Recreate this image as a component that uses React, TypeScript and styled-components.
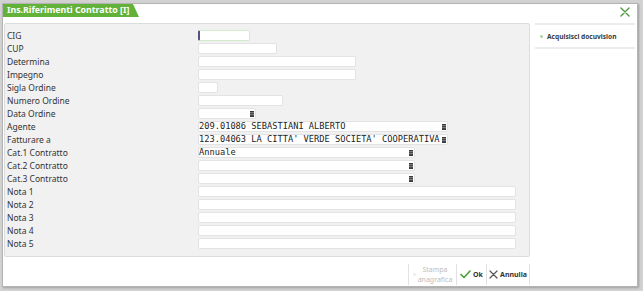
import React from "react";
import styled, { createGlobalStyle } from "styled-components";

const Global = createGlobalStyle`
  html, body { margin: 0; padding: 0; background: #d2d2d2; }
  body { font-family: "Noto Sans", "DejaVu Sans", sans-serif; }
  * { box-sizing: border-box; }
`;

const Page = styled.div`
  padding: 3px 5px 4px 2px;
  width: 643px;
  height: 291px;
`;

const Window = styled.div`
  width: 636px;
  height: 284px;
  background: #ffffff;
  border: 1px solid #b4b4b4;
  box-shadow: 1px 1px 2px rgba(0, 0, 0, 0.25);
  display: flex;
  flex-direction: column;
`;

const Header = styled.div`
  height: 19px;
  display: flex;
  justify-content: space-between;
  align-items: flex-start;
`;

const Tab = styled.div`
  width: 136px;
  height: 13px;
  background: #62b23a;
  clip-path: polygon(0 0, 130px 0, 136px 100%, 0 100%);
  color: #ffffff;
  font-size: 8.8px;
  font-weight: 700;
  line-height: 13px;
  padding-left: 4px;
  white-space: nowrap;
`;

const Close = styled.div`
  width: 12px;
  height: 12px;
  margin: 2px 6px 0 0;
  display: flex;
  align-items: center;
  justify-content: center;
`;

const Body = styled.div`
  flex: 1;
  display: flex;
  gap: 5px;
  padding: 0 2px 0 1px;
`;

const FormColumn = styled.div`
  width: 526px;
  display: flex;
  flex-direction: column;
`;

const Panel = styled.div`
  height: 234px;
  background: #f1f1f1;
  border: 1px solid #dcdcdc;
  border-radius: 2px;
  padding: 6px 0 0 2px;
  display: flex;
  flex-direction: column;
  gap: 2px;
`;

const Row = styled.div`
  display: grid;
  grid-template-columns: 191px auto;
  align-items: center;
  height: 11px;
`;

const Label = styled.div`
  font-size: 8.5px;
  color: #333333;
  line-height: 11px;
  white-space: nowrap;
`;

const Field = styled.div<{ $w: number; $focus?: boolean }>`
  position: relative;
  width: ${(p) => p.$w}px;
  height: 11px;
  background: #ffffff;
  border: 1px solid ${(p) => (p.$focus ? "#d4ebcb" : "#e3e3e3")};
  border-left: ${(p) => (p.$focus ? "2px solid #5b4f7d" : "1px solid #e3e3e3")};
  border-radius: 2px;
  display: flex;
  align-items: center;
  font-family: "DejaVu Sans Mono", "Liberation Mono", monospace;
  font-size: 8.7px;
  color: #222222;
  line-height: 9px;
  white-space: nowrap;
`;

const Lookup = styled.span`
  position: absolute;
  right: 1px;
  top: 50%;
  transform: translateY(-50%);
  width: 4px;
  height: 6px;
  display: block;
  line-height: 0;
`;

const Footer = styled.div`
  flex: 1;
  display: flex;
  justify-content: flex-end;
  align-items: flex-start;
  padding-top: 7px;
`;

const Btn = styled.div<{ $w: number; $last?: boolean; $disabled?: boolean }>`
  width: ${(p) => p.$w}px;
  height: 21px;
  border-left: 1px solid #e2e2e2;
  border-right: ${(p) => (p.$last ? "1px solid #e2e2e2" : "none")};
  display: flex;
  align-items: center;
  justify-content: center;
  gap: 2px;
  font-size: 7px;
  font-weight: ${(p) => (p.$disabled ? 400 : 700)};
  color: ${(p) => (p.$disabled ? "#bdbdbd" : "#333333")};
  line-height: 9px;
`;

const StampaText = styled.div`
  text-align: center;
  font-size: 7px;
  line-height: 10px;
`;

const Dot = styled.span<{ $c: string }>`
  width: 3px;
  height: 3px;
  border-radius: 50%;
  background: ${(p) => p.$c};
  display: inline-block;
  flex: none;
`;

const Side = styled.div`
  width: 100px;
  display: flex;
  flex-direction: column;
`;

const SideItem = styled.div`
  height: 26px;
  border-top: 2px solid #ececec;
  border-bottom: 2px solid #ececec;
  display: flex;
  align-items: center;
  gap: 4px;
  padding-left: 5px;
  font-size: 6.6px;
  font-weight: 700;
  color: #3a3a3a;
`;

const LookupIcon = () => (
  <Lookup>
    <svg width="4" height="6" viewBox="0 0 4 6">
      <rect x="0" y="0" width="4" height="6" fill="#3a3a3a" />
      <rect x="0" y="1.5" width="4" height="0.6" fill="#bbbbbb" />
      <rect x="0" y="3.5" width="4" height="0.6" fill="#bbbbbb" />
    </svg>
  </Lookup>
);

type RowDef = { label: string; w: number; value?: string; lookup?: boolean; focus?: boolean };

const rows: RowDef[] = [
  { label: "CIG", w: 52, focus: true },
  { label: "CUP", w: 79 },
  { label: "Determina", w: 158 },
  { label: "Impegno", w: 158 },
  { label: "Sigla Ordine", w: 20 },
  { label: "Numero Ordine", w: 85 },
  { label: "Data Ordine", w: 58, lookup: true },
  { label: "Agente", w: 250, value: "209.01086 SEBASTIANI ALBERTO", lookup: true },
  { label: "Fatturare a", w: 250, value: "123.04063 LA CITTA' VERDE SOCIETA' COOPERATIVA", lookup: true },
  { label: "Cat.1 Contratto", w: 217, value: "Annuale", lookup: true },
  { label: "Cat.2 Contratto", w: 217, lookup: true },
  { label: "Cat.3 Contratto", w: 217, lookup: true },
  { label: "Nota 1", w: 318 },
  { label: "Nota 2", w: 318 },
  { label: "Nota 3", w: 318 },
  { label: "Nota 4", w: 318 },
  { label: "Nota 5", w: 318 },
];

export default function App() {
  return (
    <Page>
      <Global />
      <Window>
        <Header>
          <Tab>Ins.Riferimenti Contratto [I]</Tab>
          <Close>
            <svg width="10" height="10" viewBox="0 0 10 10">
              <path d="M1 1 L9 9 M9 1 L1 9" stroke="#4e9a3c" strokeWidth="1.4" strokeLinecap="round" />
            </svg>
          </Close>
        </Header>
        <Body>
          <FormColumn>
            <Panel>
              {rows.map((r) => (
                <Row key={r.label}>
                  <Label>{r.label}</Label>
                  <Field $w={r.w} $focus={r.focus}>
                    {r.value}
                    {r.lookup && <LookupIcon />}
                  </Field>
                </Row>
              ))}
            </Panel>
            <Footer>
              <Btn $w={48} $disabled>
                <Dot $c="#e6f1e0" />
                <StampaText>
                  Stampa
                  <br />
                  anagrafica
                </StampaText>
              </Btn>
              <Btn $w={30}>
                <svg width="11" height="9" viewBox="0 0 11 9">
                  <path d="M1 4.5 L4 7.5 L10 1" stroke="#4ea336" strokeWidth="1.7" fill="none" strokeLinecap="round" strokeLinejoin="round" />
                </svg>
                Ok
              </Btn>
              <Btn $w={44} $last>
                <svg width="9" height="9" viewBox="0 0 9 9">
                  <path d="M1 1 L8 8 M8 1 L1 8" stroke="#555555" strokeWidth="1.2" strokeLinecap="round" />
                </svg>
                Annulla
              </Btn>
            </Footer>
          </FormColumn>
          <Side>
            <SideItem>
              <Dot $c="#a6d79a" />
              Acquisisci docuvision
            </SideItem>
          </Side>
        </Body>
      </Window>
    </Page>
  );
}
